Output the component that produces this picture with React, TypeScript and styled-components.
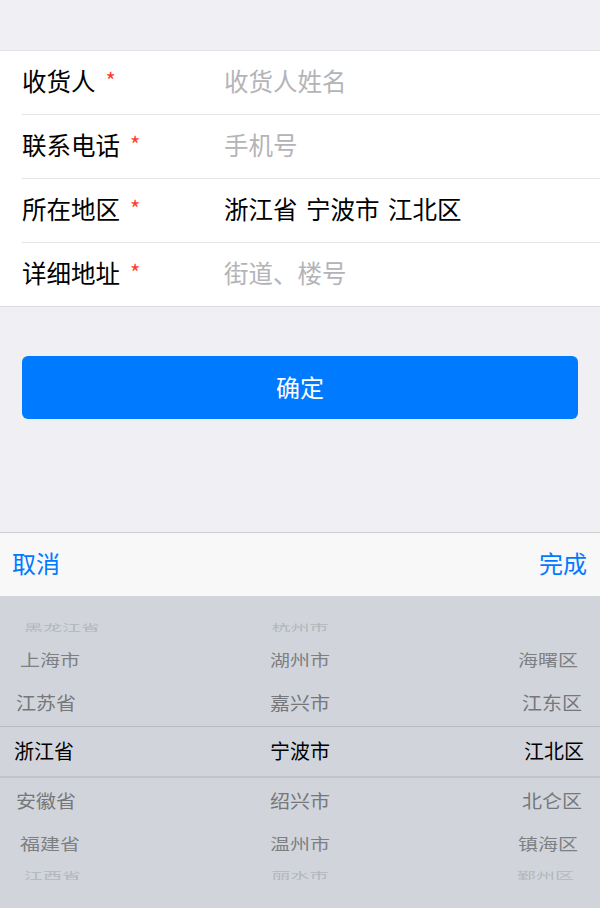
import React from 'react'
import styled, { createGlobalStyle } from 'styled-components'

const GlobalStyle = createGlobalStyle`
  html, body {
    margin: 0;
    padding: 0;
    background: #efeff4;
  }
  body {
    font-family: "Noto Sans CJK SC", "Noto Sans", sans-serif;
    -webkit-font-smoothing: antialiased;
  }
  * {
    box-sizing: border-box;
  }
`

const Page = styled.div`
  display: flex;
  flex-direction: column;
  height: 908px;
  overflow: hidden;
  background: #efeff4;
`

const Card = styled.div`
  margin-top: 50px;
  background: #fff;
  border-top: 1px solid #e2e2e6;
  border-bottom: 1px solid #dcdce0;
`

const Row = styled.div<{ $last?: boolean }>`
  display: flex;
  align-items: center;
  height: ${(p) => (p.$last ? 63 : 64)}px;
  margin-left: 22px;
  padding-bottom: 2px;
  border-bottom: ${(p) => (p.$last ? 'none' : '1px solid #e4e4e7')};
`

const Label = styled.div`
  display: flex;
  align-items: center;
  width: 202px;
  font-size: 24.5px;
  line-height: 1;
  color: #000;
`

const Star = styled.span`
  margin-left: 10px;
  font-size: 22px;
  color: #ff3b30;
  line-height: 1;
  position: relative;
  top: -3px;
`

const Value = styled.div<{ $placeholder?: boolean }>`
  font-size: 24.5px;
  line-height: 1;
  color: ${(p) => (p.$placeholder ? '#b4b4b8' : '#000')};
  word-spacing: 3px;
`

const ConfirmButton = styled.button`
  display: flex;
  align-items: center;
  justify-content: center;
  margin: 49px 22px 0;
  height: 63px;
  padding: 0 0 2px;
  border: none;
  border-radius: 6px;
  background: #007aff;
  color: #fff;
  font-family: inherit;
  font-size: 24px;
  line-height: 1;
`

const Sheet = styled.div`
  margin-top: auto;
`

const Toolbar = styled.div`
  display: flex;
  align-items: center;
  justify-content: space-between;
  height: 64px;
  padding: 0 13px 3px 12px;
  background: #f8f8f8;
  border-top: 1px solid #cdcdd1;
`

const ToolButton = styled.span`
  font-size: 24px;
  line-height: 1;
  color: #007aff;
`

const Wheel = styled.div`
  display: flex;
  flex-direction: column;
  height: 312px;
  padding: 20px 0;
  background: #d1d5db;
`

const WheelRow = styled.div<{ $h: number; $selected?: boolean }>`
  display: grid;
  grid-template-columns: 1fr 1fr 1fr;
  align-items: center;
  height: ${(p) => p.$h}px;
  border-top: ${(p) => (p.$selected ? '1px solid #b8bcc2' : 'none')};
  border-bottom: ${(p) => (p.$selected ? '2px solid #c1c5cb' : 'none')};
`

const Cell = styled.div<{ $align: 'left' | 'center' | 'right'; $inset: number }>`
  text-align: ${(p) => p.$align};
  padding-left: ${(p) => (p.$align === 'left' ? 14 + p.$inset : 0)}px;
  padding-right: ${(p) => (p.$align === 'right' ? 16 + p.$inset : 0)}px;
`

const Item = styled.span<{ $scale: number; $color: string; $size: number }>`
  display: inline-block;
  font-size: ${(p) => p.$size}px;
  line-height: 1.2;
  color: ${(p) => p.$color};
  transform: scaleY(${(p) => p.$scale});
`

const fields = [
  { label: '收货人', value: '收货人姓名', placeholder: true },
  { label: '联系电话', value: '手机号', placeholder: true },
  { label: '所在地区', value: '浙江省 宁波市 江北区', placeholder: false },
  { label: '详细地址', value: '街道、楼号', placeholder: true }
]

const wheelRows = [
  { h: 24, scale: 0.5, color: '#b3b6bb', size: 19, inset: 10, items: ['黑龙江省', '杭州市', ''] },
  { h: 40, scale: 0.78, color: '#7e7f82', size: 20, inset: 6, items: ['上海市', '湖州市', '海曙区'] },
  { h: 46, scale: 0.92, color: '#76777a', size: 20, inset: 2, items: ['江苏省', '嘉兴市', '江东区'] },
  { h: 52, scale: 1, color: '#000', size: 20, inset: 0, items: ['浙江省', '宁波市', '江北区'], selected: true },
  { h: 46, scale: 0.92, color: '#76777a', size: 20, inset: 2, items: ['安徽省', '绍兴市', '北仑区'] },
  { h: 40, scale: 0.78, color: '#7e7f82', size: 20, inset: 6, items: ['福建省', '温州市', '镇海区'] },
  { h: 24, scale: 0.5, color: '#b3b6bb', size: 19, inset: 10, items: ['江西省', '丽水市', '鄞州区'] }
]

const aligns: Array<'left' | 'center' | 'right'> = ['left', 'center', 'right']

const App = (): JSX.Element => {
  return (
    <Page>
      <GlobalStyle />
      <Card>
        {fields.map((field, index) => (
          <Row key={field.label} $last={index === fields.length - 1}>
            <Label>
              {field.label}
              <Star>*</Star>
            </Label>
            <Value $placeholder={field.placeholder}>{field.value}</Value>
          </Row>
        ))}
      </Card>
      <ConfirmButton type="button">确定</ConfirmButton>
      <Sheet>
        <Toolbar>
          <ToolButton>取消</ToolButton>
          <ToolButton>完成</ToolButton>
        </Toolbar>
        <Wheel>
          {wheelRows.map((row, rowIndex) => (
            <WheelRow key={rowIndex} $h={row.h} $selected={row.selected}>
              {row.items.map((text, colIndex) => (
                <Cell key={colIndex} $align={aligns[colIndex]} $inset={row.inset}>
                  <Item $scale={row.scale} $color={row.color} $size={row.size}>
                    {text}
                  </Item>
                </Cell>
              ))}
            </WheelRow>
          ))}
        </Wheel>
      </Sheet>
    </Page>
  )
}

export default App
